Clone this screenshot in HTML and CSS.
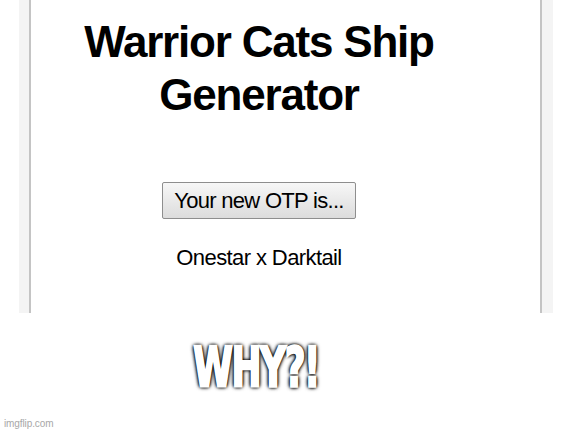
FILE: index.html
```html
<!DOCTYPE html>
<html>
<head>
<meta charset="utf-8">
<link rel="stylesheet" href="styles.css">
</head>
<body>
<div class="shot">
  <div class="card">
    <div class="content">
      <h1 class="title">Warrior Cats Ship<br>Generator</h1>
      <button class="btn">Your new OTP is...</button>
      <p class="result">Onestar x Darktail</p>
    </div>
  </div>
</div>
<div class="caption"><span class="caption-text">WHY?!</span></div>
<div class="mark">imgflip.com</div>
</body>
</html>
```

FILE: styles.css
```css
html, body {
  margin: 0;
  padding: 0;
  background: #ffffff;
}
body {
  width: 577px;
  height: 433px;
  overflow: hidden;
  font-family: "Liberation Sans", Arial, sans-serif;
}
.shot {
  margin-left: 19px;
  width: 534px;
  height: 313px;
  box-sizing: border-box;
  padding: 0 11px 0 10px;
  background: #f4f4f4;
}
.card {
  height: 100%;
  box-sizing: border-box;
  border-left: 2px solid #c4c4c4;
  border-right: 2px solid #c4c4c4;
  background: #ffffff;
}
.content {
  width: 456px;
  display: flex;
  flex-direction: column;
  align-items: center;
  padding-top: 15px;
}
.title {
  margin: 0;
  font-size: 44px;
  line-height: 53px;
  font-weight: bold;
  color: #000;
  text-align: center;
  letter-spacing: -1.2px;
}
.btn {
  margin-top: 61px;
  width: 194px;
  height: 37px;
  box-sizing: border-box;
  border: 1px solid #8e8e8e;
  border-radius: 2px;
  background: linear-gradient(#f7f7f7, #dcdcdc);
  font-family: "Liberation Sans", Arial, sans-serif;
  font-size: 22px;
  letter-spacing: -0.7px;
  color: #000;
  padding: 0;
}
.result {
  margin: 26px 0 0;
  font-size: 22px;
  line-height: 26px;
  letter-spacing: -0.6px;
  color: #000;
}
.caption {
  width: 512px;
  height: 54px;
  margin-top: 28px;
  display: flex;
  justify-content: center;
  align-items: center;
}
.caption-text {
  display: inline-block;
  font-family: "DejaVu Sans Condensed", "Liberation Sans Narrow", sans-serif;
  font-weight: bold;
  font-size: 42px;
  line-height: 54px;
  letter-spacing: -1.5px;
  color: #fff;
  -webkit-text-stroke: 1.8px #fff;
  transform: scale(0.95, 1.3);
  text-shadow: 0 0 1px #000, 0 0 2px #000, 0 0 2px #000, 0 0 3px #000, 0 0 3px #000, 0 0 4px #000, 0 0 5px #000;
}
.mark {
  position: absolute;
  left: 4px;
  top: 418px;
  font-size: 10px;
  letter-spacing: -0.1px;
  color: #a8a8a8;
}
```
